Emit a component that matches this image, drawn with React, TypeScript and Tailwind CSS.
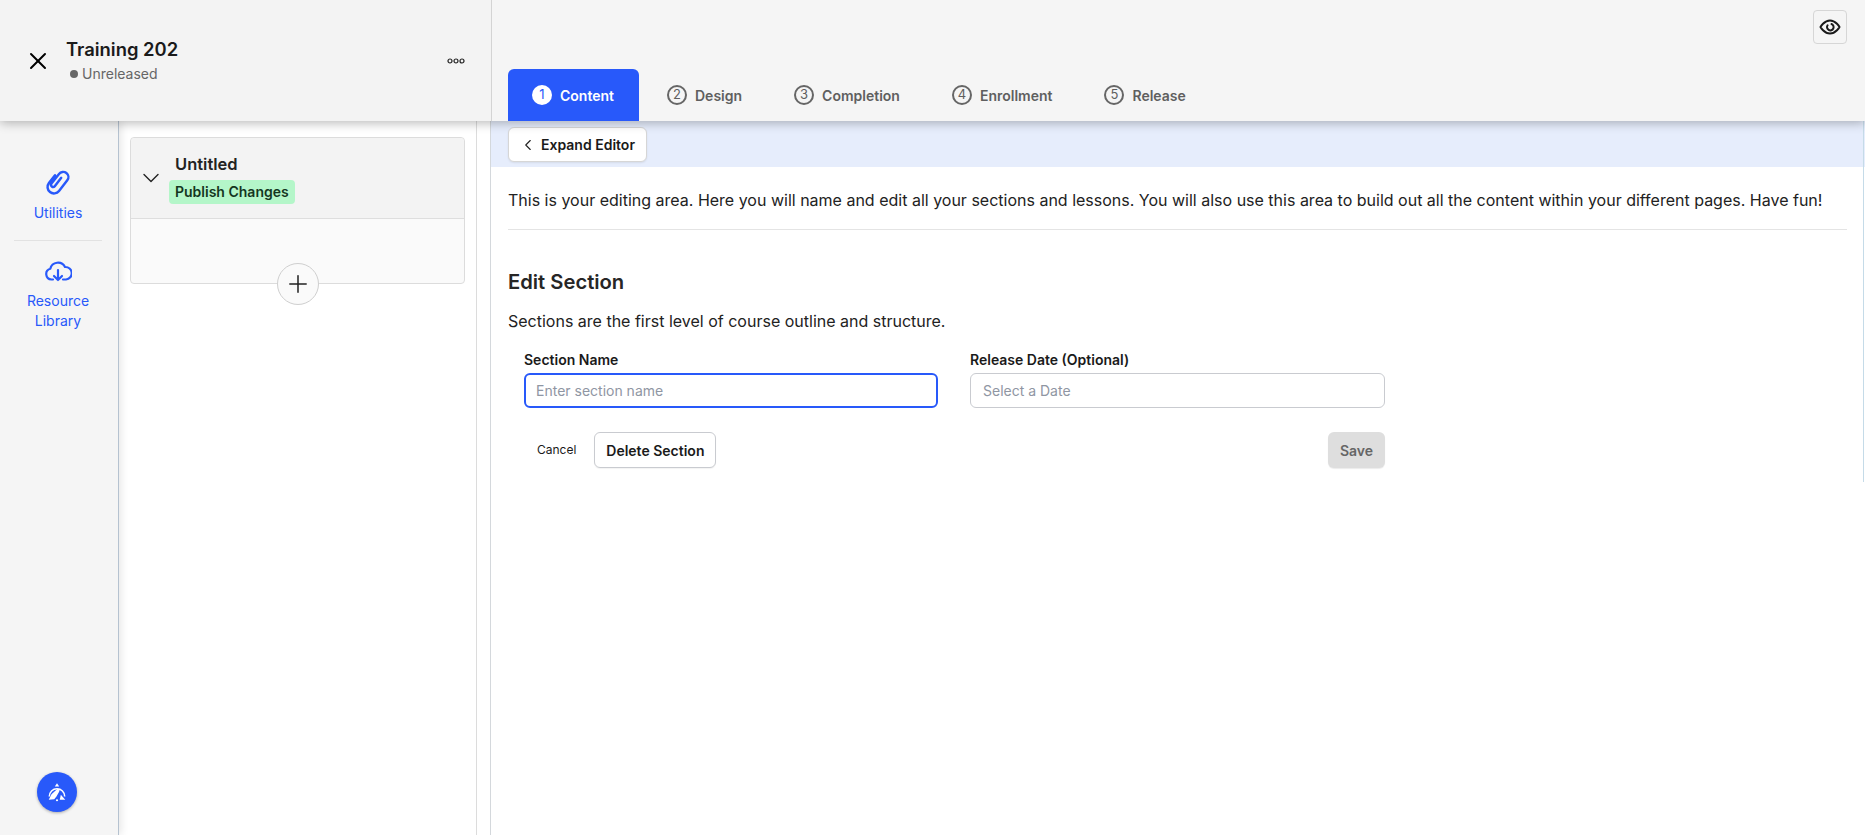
import React from "react";
import { X, ChevronDown, ChevronLeft, Plus } from "lucide-react";

const tabs = [
  { n: "1", label: "Content", active: true },
  { n: "2", label: "Design" },
  { n: "3", label: "Completion" },
  { n: "4", label: "Enrollment" },
  { n: "5", label: "Release" },
];

function Tab({ n, label, active }: { n: string; label: string; active?: boolean }) {
  return (
    <div
      className={
        active
          ? "flex h-[52px] items-center gap-2 rounded-t-md bg-[#2859fa] pl-6 pr-[25px] text-white"
          : "ml-1 flex h-[52px] items-center gap-2 px-6 text-[#5f5f5f]"
      }
    >
      <span
        className={
          active
            ? "flex h-5 w-5 items-center justify-center rounded-full bg-white text-[13px] font-normal text-[#2859fa]"
            : "flex h-5 w-5 items-center justify-center rounded-full border-2 border-[#666] text-[13px] font-normal"
        }
      >
        {n}
      </span>
      <span className="text-[14px] font-semibold">{label}</span>
    </div>
  );
}

export default function App() {
  return (
    <div className="relative flex h-[835px] w-full flex-col overflow-hidden bg-white font-['Inter',sans-serif] text-[#1f1f1f]">
      <header className="relative z-20 flex h-[121px] shrink-0 bg-[#f5f5f5] shadow-[0_2px_10px_rgba(0,0,0,0.28)]">
        <div className="flex w-[492px] shrink-0 items-center border-r border-[#d4d4d4] bg-[#f3f3f3] pl-6 pr-[26px]">
          <X className="h-7 w-7 text-black" strokeWidth={1.700} />
          <div className="ml-[14px] flex-1">
            <div className="text-[18.400px] font-semibold leading-6 text-[#1a1a1a]">Training 202</div>
            <div className="mt-[3px] ml-1 flex items-center gap-1 text-[14px] leading-5 text-[#666]">
              <span className="h-2 w-2 rounded-full bg-[#666]" />
              Unreleased
            </div>
          </div>
          <svg width="18" height="6" viewBox="0 0 18 6" fill="none" stroke="#222" strokeWidth="1.200">
            <circle cx="3" cy="3" r="2" />
            <circle cx="9" cy="3" r="2" />
            <circle cx="15" cy="3" r="2" />
          </svg>
        </div>
        <div className="flex flex-1 flex-col pl-4">
          <div className="flex justify-end pr-[18px] pt-[10px]">
            <div className="flex h-[34px] w-[34px] items-center justify-center rounded border border-[#d6d6d6]">
              <svg width="24" height="24" viewBox="0 0 24 24" fill="none" stroke="#1a1a1a" strokeWidth="2" strokeLinecap="round" strokeLinejoin="round">
                <path d="M2.500 12S6 5.500 12 5.500 21.500 12 21.500 12 18 18.500 12 18.500 2.500 12 2.500 12z" />
                <path d="M9.600 10.200A3.300 3.300 0 1 0 13.500 9" />
              </svg>
            </div>
          </div>
          <div className="mt-auto flex">
            {tabs.map((t) => (
              <Tab key={t.n} {...t} />
            ))}
          </div>
        </div>
      </header>

      <div className="flex min-h-0 flex-1">
        <aside className="relative z-10 flex w-[119px] shrink-0 flex-col items-center border-r border-[#b5c2d0] bg-[#f5f5f5] pr-[2px] shadow-[2px_0_8px_rgba(0,0,0,0.1)]">
          <svg className="mt-[47px]" width="28" height="28" viewBox="0 0 24 24" fill="none" stroke="#2859fa" strokeWidth="2.100" strokeLinecap="round" strokeLinejoin="round">
            <g transform="rotate(38 12 12)">
              <path d="M12 7.500v9a1.800 1.800 0 0 1-3.600 0V6a4.500 4.500 0 0 1 9 0v11.500a5.500 5.500 0 0 1-11 0V9" />
            </g>
          </svg>
          <div className="mt-[7px] text-[14px] leading-5 text-[#2859fa]">Utilities</div>
          <div className="mt-[17px] h-px w-[88px] bg-[#e2e2e2]" />
          <svg className="mt-[17px]" width="28" height="25" viewBox="0 0 28 25" fill="none" stroke="#2859fa" strokeWidth="2.200" strokeLinecap="round" strokeLinejoin="round">
            <path d="M9 21.500H7.500a5.500 5.500 0 0 1-1.200-10.800A7.900 7.900 0 0 1 21 9a6.200 6.200 0 0 1 1 12.500L19 21.500" />
            <path d="M14 12v10m-4-4l4 4 4-4" />
          </svg>
          <div className="mt-2 text-center text-[14px] leading-5 text-[#2859fa]">
            Resource
            <br />
            Library
          </div>
          <div className="mb-[23px] -ml-[2px] mt-auto flex h-10 w-10 items-center justify-center rounded-full bg-[#2859fa] shadow-[0_1px_3px_rgba(0,0,0,0.3)]">
            <svg width="22" height="22" viewBox="0 0 20 20" fill="none">
              <path d="M3 14a7 7 0 0 1 14 0" stroke="#fff" strokeWidth="1.400" />
              <path d="M10 2l2 3H8z" fill="#fff" />
              <path d="M2.500 17l2.500-5 5-4.500c2.200-.8 3 .8 1.800 2.500L9.500 14l-2 2.500z" fill="#fff" />
              <path d="M13.500 12.500l4 4.500h-5z" fill="#fff" />
              <circle cx="10" cy="17.500" r="1" fill="#fff" />
            </svg>
          </div>
        </aside>

        <section className="w-[358px] shrink-0 border-r border-[#dcdcdc] bg-white pl-[11px] pr-[11px] pt-4">
          <div className="relative rounded border border-[#dcdcdc] bg-[#fafafa]">
            <div className="flex h-[81px] items-center rounded-t border-b border-[#dedede] bg-[#f3f3f3] pl-[6px]">
              <ChevronDown className="h-7 w-7 text-[#222]" strokeWidth={1.200} />
              <div className="ml-1">
                <div className="ml-[6px] -mt-[1px] text-[16.500px] font-semibold leading-6 text-[#222]">Untitled</div>
                <div className="-mb-[1px] mt-[4px] rounded bg-[#b4f6c9] px-[6px] text-[14px] font-semibold leading-6 text-[#14361f]">
                  Publish Changes
                </div>
              </div>
            </div>
            <div className="h-16" />
            <div className="absolute bottom-[-22px] left-[146px] flex h-[42px] w-[42px] items-center justify-center rounded-full border border-[#cfcfcf] bg-[#fafafa]">
              <Plus className="h-7 w-7 text-[#222]" strokeWidth={1.300} />
            </div>
          </div>
        </section>

        <div className="w-[14px] shrink-0 border-r border-[#d4d8dc] bg-white" />

        <main className="flex min-w-0 flex-1 flex-col">
          <div className="h-[46px] bg-[#e6edfc] pl-[17px] pt-[6px]">
            <div className="flex h-[35px] w-[139px] items-center rounded-md border border-[#d6d6d6] bg-white pl-[10px] shadow-[0_1px_2px_rgba(0,0,0,0.08)]">
              <ChevronLeft className="h-[18px] w-[18px] text-[#222]" strokeWidth={1.500} />
              <span className="ml-[4px] text-[14px] font-semibold text-[#1a1a1a]">Expand Editor</span>
            </div>
          </div>
          <div className="flex-1 pl-[17px] pr-[18px]">
            <p className="flex h-[63px] items-center border-b border-[#e4e4e4] pt-[3px] text-[16px] text-[#222]">
              This is your editing area. Here you will name and edit all your sections and lessons. You will also use this area to build out all the content within your different pages. Have fun!
            </p>
            <h2 className="mt-[38px] text-[20.200px] font-semibold leading-7 text-[#262626]">Edit Section</h2>
            <p className="mt-[13px] text-[16px] leading-6 text-[#222]">Sections are the first level of course outline and structure.</p>
            <div className="ml-4 mt-[17px] w-[861px]">
              <div className="flex gap-[32px]">
                <div className="w-[414px]">
                  <label className="block text-[14px] font-semibold leading-5 text-[#1a1a1a]">Section Name</label>
                  <div className="mt-[3px] flex h-[35px] items-center rounded-md border-2 border-[#2859fa] pl-[10px] text-[14px] text-[#8f96a3]">
                    Enter section name
                  </div>
                </div>
                <div className="w-[415px]">
                  <label className="block text-[14px] font-semibold leading-5 text-[#1a1a1a]">Release Date (Optional)</label>
                  <div className="mt-[3px] flex h-[35px] items-center rounded-md border border-[#c9cbd0] pl-3 text-[14px] text-[#8f96a3]">
                    Select a Date
                  </div>
                </div>
              </div>
              <div className="mt-[24px] flex items-center">
                <span className="ml-[13px] text-[12px] text-[#1a1a1a]">Cancel</span>
                <div className="ml-[18px] flex h-[36px] w-[122px] items-center justify-center rounded-md border border-[#c9cbd0] bg-white text-[14px] font-semibold text-[#1a1a1a] shadow-[0_1px_1px_rgba(0,0,0,0.05)]">
                  Delete Section
                </div>
                <div className="ml-auto flex h-[36px] w-[57px] items-center justify-center rounded-md bg-[#dedede] text-[14px] font-semibold text-[#666] shadow-[0_1px_1px_rgba(0,0,0,0.08)]">
                  Save
                </div>
              </div>
            </div>
          </div>
        </main>
      </div>
      <div className="pointer-events-none absolute right-0 top-[121px] z-10 h-[361px] w-[2px] border-l border-[#c5dbe8]" />
    </div>
  );
}
